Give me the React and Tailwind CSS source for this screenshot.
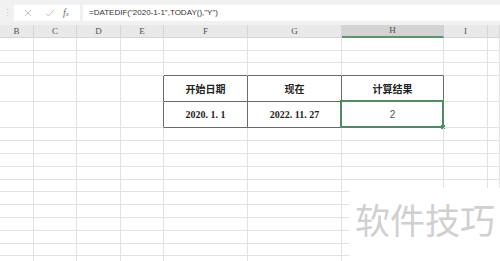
import React from "react";

const letters = ["B", "C", "D", "E", "F", "G", "H", "I", ""];
const rowHeights = [
  "h-[13px]", "h-[12px]", "h-[13px]", "h-[26px]", "h-[26px]", "h-[13px]", "h-[13px]", "h-[13px]",
  "h-[13px]", "h-[12px]", "h-[13px]", "h-[13px]", "h-[13px]", "h-[13px]", "h-[12px]", "h-[13px]",
];
const gridCols = "grid grid-cols-[34px_43px_44px_43px_84px_94px_102px_44px_12px]";

const content = {
  "3-4": { text: "开始日期", kind: "head" },
  "3-5": { text: "现在", kind: "head" },
  "3-6": { text: "计算结果", kind: "head" },
  "4-4": { text: "2020. 1. 1", kind: "num" },
  "4-5": { text: "2022. 11. 27", kind: "num" },
  "4-6": { text: "2", kind: "val" },
};

function Cell({ r, c }) {
  const darkRight = (r === 3 || r === 4) && c >= 3 && c <= 6;
  const darkBottom = (r >= 2 && r <= 4) && c >= 4 && c <= 6;
  const cls = [
    "relative flex items-center justify-center border-r border-b",
    darkRight ? "border-r-[#6a6a6a]" : "border-r-[#e2e2e2]",
    darkBottom ? "border-b-[#6a6a6a]" : "border-b-[#e2e2e2]",
  ].join(" ");
  const item = content[`${r}-${c}`];
  return (
    <div className={cls}>
      {item && item.kind === "head" && (
        <span className="text-[10px] font-bold text-[#222] font-['Noto_Sans_CJK_SC',sans-serif] leading-none">
          {item.text}
        </span>
      )}
      {item && item.kind === "num" && (
        <span className="text-[10px] font-bold text-[#222] font-['Liberation_Serif',serif] leading-none whitespace-pre">
          {item.text}
        </span>
      )}
      {item && item.kind === "val" && (
        <span className="text-[10px] text-[#555] font-['Liberation_Sans',sans-serif] leading-none">
          {item.text}
        </span>
      )}
      {r === 4 && c === 6 && (
        <div className="absolute -top-[2px] -left-[2px] -right-[1px] -bottom-[1px] border-2 border-[#4f8b64]">
          <div className="absolute -right-[3px] -bottom-[3px] w-[4px] h-[4px] bg-[#4f8b64]" />
        </div>
      )}
    </div>
  );
}

export default function App() {
  return (
    <div className="relative w-[500px] h-[261px] overflow-hidden bg-white">
      {/* formula bar */}
      <div className="flex items-center h-[25px] bg-[#f1f1f1] pr-0">
        <div className="w-[14px] flex justify-center text-[#c4c4c4] text-[9px] leading-none">⋮</div>
        <div className="flex items-center w-[66px] h-[16px] bg-white">
          <svg width="22" height="16" viewBox="0 0 22 16" className="ml-[3px]">
            <path d="M8 5 L14 11 M14 5 L8 11" stroke="#c2c2c2" strokeWidth="1" fill="none" />
          </svg>
          <svg width="22" height="16" viewBox="0 0 22 16">
            <path d="M7 8.5 L9.5 11 L15 5" stroke="#c2c2c2" strokeWidth="1" fill="none" />
          </svg>
          <span className="ml-[2px] text-[10px] italic text-[#707070] font-['Liberation_Serif',serif] leading-none">
            f<span className="text-[7px]">x</span>
          </span>
        </div>
        <div className="ml-[3px] flex-1 h-[16px] bg-white flex items-center pl-[6px]">
          <span className="text-[8px] text-[#333] font-['Liberation_Sans',sans-serif] leading-none whitespace-pre">
            =DATEDIF("2020-1-1",TODAY(),"Y")
          </span>
        </div>
      </div>

      {/* column headers */}
      <div className={`${gridCols} h-[13px] bg-[#e9e9e9] border-b border-[#d6d6d6]`}>
        {letters.map((l, i) => (
          <div
            key={i}
            className={
              i === 6
                ? "flex items-center justify-center bg-[#d3d3d3] border-r border-r-[#d0d0d0] border-b-2 border-b-[#5a9470] -mb-[1px]"
                : "flex items-center justify-center border-r border-r-[#d6d6d6]"
            }
          >
            <span className="text-[9px] text-[#505050] font-['Liberation_Serif',serif] leading-none">{l}</span>
          </div>
        ))}
      </div>

      {/* grid body */}
      {rowHeights.map((h, r) => (
        <div key={r} className={`${gridCols} ${h}`}>
          {letters.map((_, c) => (
            <Cell key={c} r={r} c={c} />
          ))}
        </div>
      ))}

      {/* watermark */}
      <div className="absolute left-[349px] top-[188px] right-0 bottom-0 bg-white">
        <div className="absolute left-[6px] top-[13px] text-[35px] leading-none text-[#d0d0d0] font-['Noto_Sans_CJK_SC',sans-serif] whitespace-nowrap">
          软件技巧
        </div>
      </div>
    </div>
  );
}
